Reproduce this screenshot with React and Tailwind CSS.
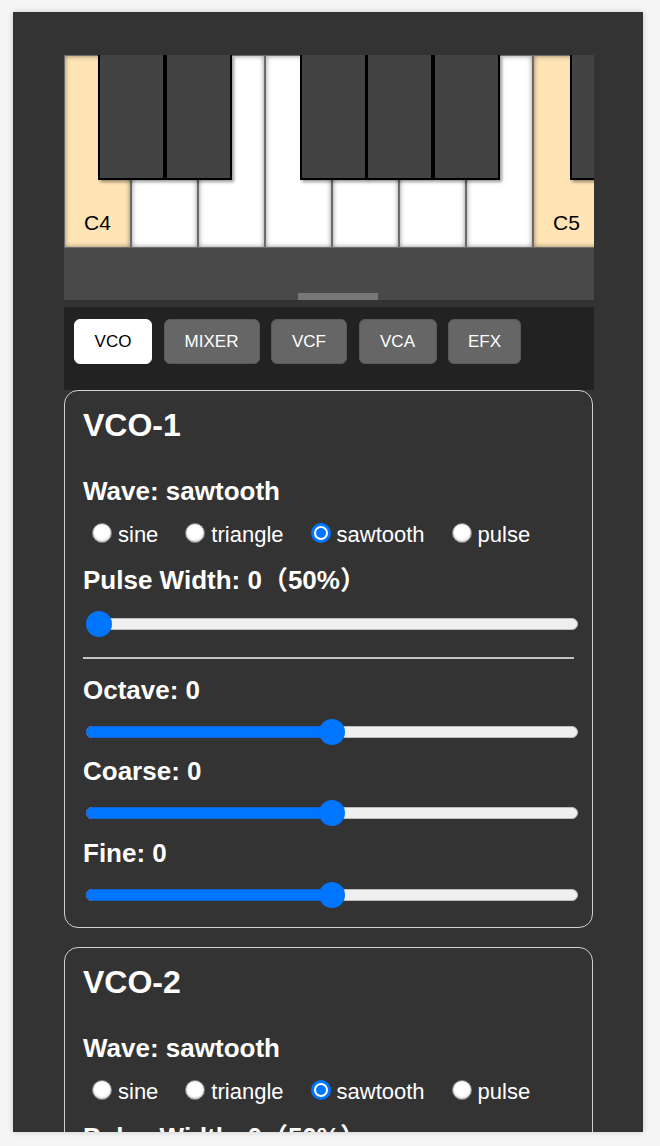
import React from "react";

const whiteKeys = [
  { note: "C4", c: true },
  { note: "D4" },
  { note: "E4" },
  { note: "F4" },
  { note: "G4" },
  { note: "A4" },
  { note: "B4" },
  { note: "C5", c: true },
  { note: "D5" },
];

const blackKeys = [
  { note: "C#4", left: "left-[34px]" },
  { note: "D#4", left: "left-[101px]" },
  { note: "F#4", left: "left-[236px]" },
  { note: "G#4", left: "left-[302px]" },
  { note: "A#4", left: "left-[369px]" },
  { note: "C#5", left: "left-[506px]" },
];

const tabs = [
  { name: "VCO", w: "w-[78px]", active: true },
  { name: "MIXER", w: "w-[96px]" },
  { name: "VCF", w: "w-[76px]" },
  { name: "VCA", w: "w-[78px]" },
  { name: "EFX", w: "w-[73px]" },
];

const waves = ["sine", "triangle", "sawtooth", "pulse"];

function Keyboard() {
  return (
    <div className="w-[530px]">
      <div className="relative flex h-[193px] w-[530px] overflow-hidden">
        {whiteKeys.map((key) => (
          <div
            key={key.note}
            className={`flex h-full w-[67px] shrink-0 flex-col justify-end border border-[#6b6b6b] pb-[14px] pl-[19px] shadow-[inset_0_0_5px_rgba(0,0,0,0.45)] ${
              key.c ? "bg-[#ffe4b5]" : "bg-white"
            }`}
          >
            {key.c && <span className="text-[21px] leading-none text-black">{key.note}</span>}
          </div>
        ))}
        {blackKeys.map((key) => (
          <div
            key={key.note}
            className={`absolute top-0 h-[125px] w-[67px] border-2 border-t-0 border-black bg-[#434343] shadow-[2px_2px_3px_rgba(0,0,0,0.4)] ${key.left}`}
          />
        ))}
      </div>
      {/* scroll bar area */}
      <div className="flex h-[52px] items-end justify-center bg-[#494949]">
        <div className="ml-[18px] h-[7px] w-[80px] bg-[#777]" />
      </div>
    </div>
  );
}

function Tabs() {
  return (
    <div className="mt-[7px] flex h-[83px] w-[530px] items-start gap-[11.5px] bg-[#222] px-[10px] pt-[12px]">
      {tabs.map((tab) => (
        <div
          key={tab.name}
          className={`flex h-[45px] items-center justify-center rounded-[6px] border text-[17px] ${tab.w} ${
            tab.active
              ? "border-white bg-white text-black"
              : "border-[#5a5a5a] bg-[#666] text-white"
          }`}
        >
          {tab.name}
        </div>
      ))}
    </div>
  );
}

function Radio({ checked }) {
  if (checked) {
    return (
      <span className="mb-[4px] flex h-[20px] w-[20px] items-center justify-center rounded-full border-[3px] border-[#0075ff] bg-white">
        <span className="h-[10px] w-[10px] rounded-full bg-[#0075ff]" />
      </span>
    );
  }
  return (
    <span className="mb-[4px] h-[20px] w-[20px] rounded-full border border-[#7a7a7a] bg-white shadow-[inset_0_-1px_2px_rgba(0,0,0,0.25)]" />
  );
}

function Slider({ value }) {
  const thumb = (492 - 26) * value;
  return (
    <div className="relative ml-[3px] h-[26px] w-[492px]">
      <div className="absolute left-0 right-0 top-[7px] h-[12px] rounded-full border border-[#bdbdbd] bg-[#efefef]" />
      <div
        className="absolute left-0 top-[7px] h-[12px] rounded-full border border-[#1463d6] bg-[#0075ff]"
        style={{ width: thumb + 13 }}
      />
      <div
        className="absolute top-0 h-[26px] w-[26px] rounded-full bg-[#0075ff]"
        style={{ left: thumb }}
      />
    </div>
  );
}

function Label({ children, className = "" }) {
  return <div className={`text-[26px] font-bold leading-[30px] text-white ${className}`}>{children}</div>;
}

function VcoCard({ title, className = "" }) {
  return (
    <section className={`w-[529px] rounded-[14px] border border-[#cfcfcf] bg-[#333] px-[18px] pb-[19px] pt-[16px] ${className}`}>
      <h2 className="text-[32px] font-bold leading-[36px] text-white">{title}</h2>

      <Label className="mt-[33px]">Wave: sawtooth</Label>
      <div className="mt-[15px] flex h-[28px] items-center gap-[27px] pl-[9px]">
        {waves.map((w) => (
          <label key={w} className="flex items-center gap-[6px] text-[22px] leading-[28px] text-white">
            <Radio checked={w === "sawtooth"} />
            {w}
          </label>
        ))}
      </div>

      <Label className="mt-[16px]">Pulse Width: 0（50%）</Label>
      <div className="mt-[16px]">
        <Slider value={0} />
      </div>

      <div className="mt-[20px] h-[2px] w-full bg-[#c4c4c4]" />

      <Label className="mt-[16px]">Octave: 0</Label>
      <div className="mt-[14px]">
        <Slider value={0.5} />
      </div>
      <Label className="mt-[11px]">Coarse: 0</Label>
      <div className="mt-[14px]">
        <Slider value={0.5} />
      </div>
      <Label className="mt-[12px]">Fine: 0</Label>
      <div className="mt-[14px]">
        <Slider value={0.5} />
      </div>
    </section>
  );
}

export default function App() {
  return (
    <div className="h-[1146px] w-[660px] overflow-hidden bg-[#f5f5f5] pl-[13px] pt-[12px] font-['Liberation_Sans','Noto_Sans_CJK_JP',Arial,sans-serif]">
      <div className="h-[1120px] w-[630px] overflow-hidden bg-[#333] pl-[51px] pt-[43px] shadow-[0_0_6px_rgba(0,0,0,0.18)]">
        <Keyboard />
        <Tabs />
        <VcoCard title="VCO-1" />
        <VcoCard title="VCO-2" className="mt-[19px]" />
      </div>
    </div>
  );
}
